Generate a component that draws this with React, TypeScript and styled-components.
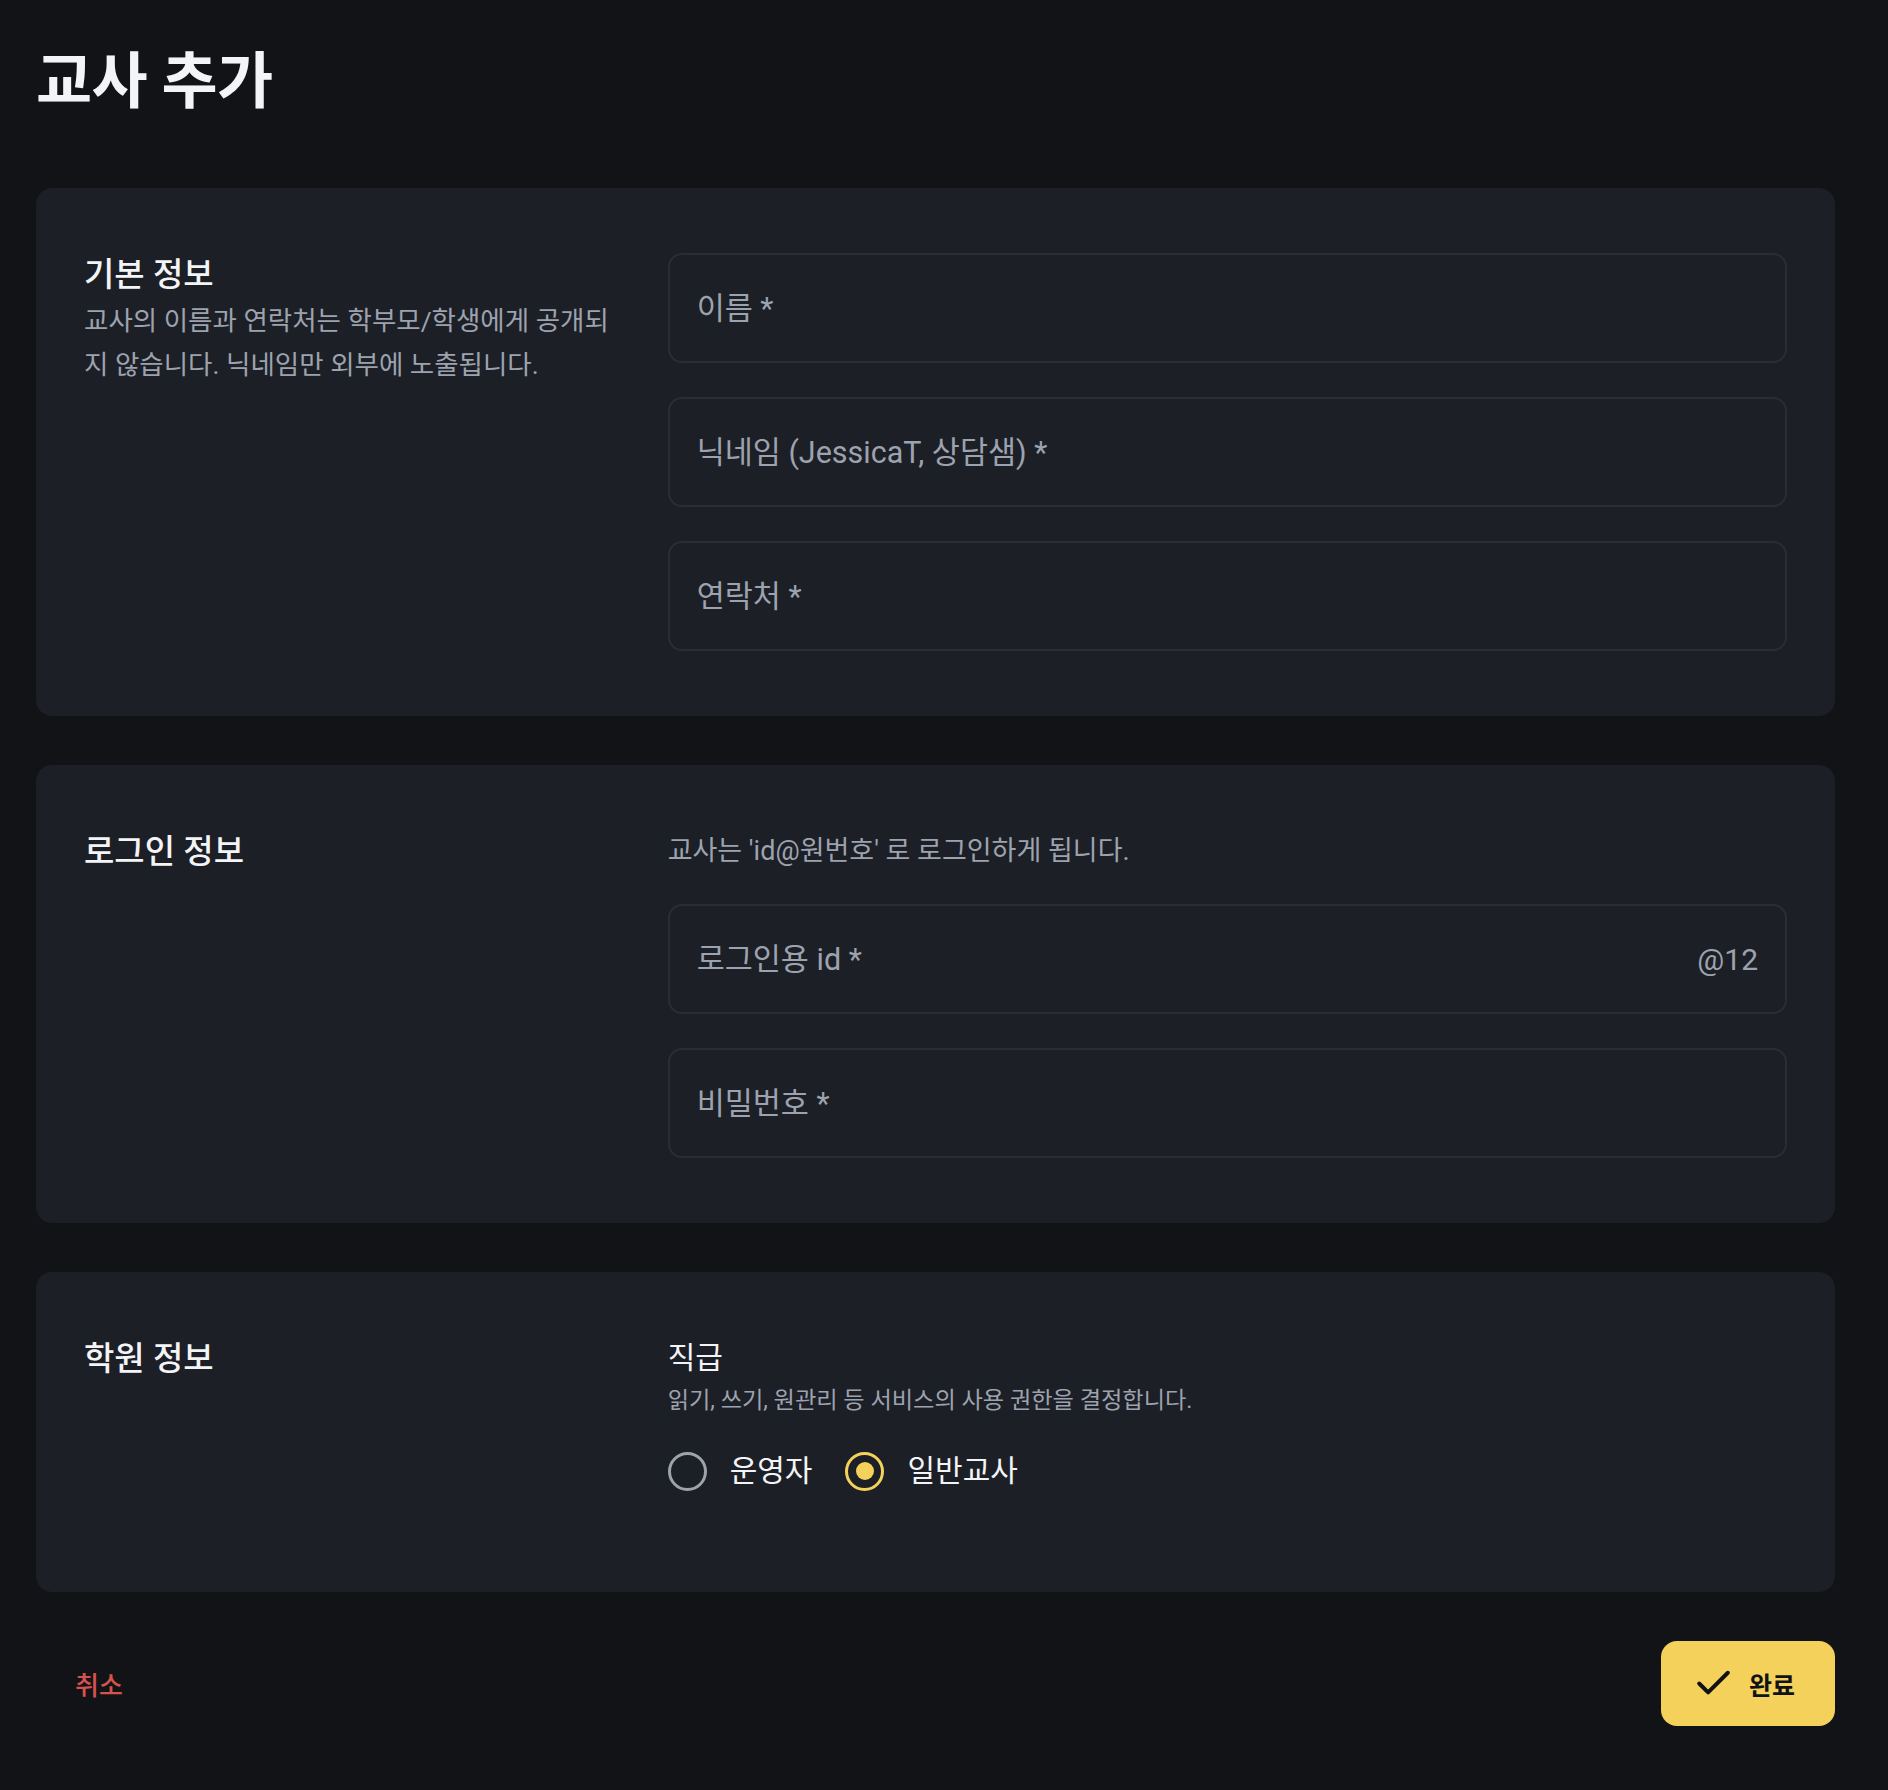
import styled, { createGlobalStyle } from "styled-components";
import { Check } from "lucide-react";

const GlobalStyle = createGlobalStyle`
  html, body {
    margin: 0;
    padding: 0;
    background: #121317;
  }
  body {
    font-family: Roboto, "Noto Sans CJK KR", sans-serif;
    color: #f3f4f6;
  }
  * {
    box-sizing: border-box;
  }
`;

const Page = styled.div`
  min-height: 1790px;
  padding: 42px 53px 63px 36px;
  display: flex;
  flex-direction: column;
`;

const PageTitle = styled.h1`
  margin: 0 0 66px;
  font-size: 61px;
  font-weight: 700;
  line-height: 80px;
  letter-spacing: -0.01em;
  color: #f3f4f6;
`;

const Sections = styled.div`
  display: flex;
  flex-direction: column;
  gap: 49px;
`;

const Card = styled.section`
  background: #1d1f26;
  border-radius: 16px;
  padding: 65px 48px;
  display: grid;
  grid-template-columns: repeat(3, minmax(0, 1fr));
  gap: 48px;
`;

const Intro = styled.div`
  display: flex;
  flex-direction: column;
`;

const SectionTitle = styled.h2`
  margin: 0;
  font-size: 33px;
  font-weight: 500;
  line-height: 43px;
  color: #f3f4f6;
`;

const SectionDesc = styled.p`
  margin: 3px 0 0;
  font-size: 26.5px;
  line-height: 44px;
  color: #9ca3af;
`;

const Fields = styled.div`
  grid-column: span 2;
  display: flex;
  flex-direction: column;
  gap: 34px;
`;

const Hint = styled.p`
  margin: 0 0 -2px;
  font-size: 27px;
  line-height: 42px;
  color: #9ca3af;
`;

const InputBox = styled.label`
  height: 110px;
  border: 2px solid #2a2d35;
  border-radius: 14px;
  padding: 0 27px 0 25px;
  display: flex;
  align-items: center;
  gap: 16px;
`;

const Input = styled.input`
  flex: 1;
  min-width: 0;
  border: 0;
  outline: none;
  background: transparent;
  font: inherit;
  font-size: 30.5px;
  color: #f3f4f6;
  &::placeholder {
    color: #9ca3af;
  }
`;

const Suffix = styled.span`
  font-size: 30px;
  color: #9ca3af;
`;

const Group = styled.div`
  grid-column: span 2;
  display: flex;
  flex-direction: column;
`;

const GroupLabel = styled.div`
  font-size: 30px;
  font-weight: 400;
  line-height: 42px;
  color: #f3f4f6;
`;

const GroupDesc = styled.div`
  margin-top: 4px;
  font-size: 23.2px;
  line-height: 34px;
  color: #9ca3af;
`;

const RadioRow = styled.div`
  margin: 34px 0 36px;
  display: flex;
  align-items: center;
  gap: 33px;
`;

const RadioOption = styled.label`
  display: flex;
  align-items: center;
  gap: 23px;
  font-size: 30px;
  line-height: 40px;
  color: #f3f4f6;
  cursor: pointer;
`;

const RadioCircle = styled.span<{ $checked?: boolean }>`
  width: 39px;
  height: 39px;
  border-radius: 50%;
  border: 3.5px solid ${({ $checked }) => ($checked ? "#f3d15b" : "#9ca3af")};
  display: flex;
  align-items: center;
  justify-content: center;
  &::after {
    content: "";
    width: 18px;
    height: 18px;
    border-radius: 50%;
    background: ${({ $checked }) => ($checked ? "#f3d15b" : "transparent")};
  }
`;

const Footer = styled.div`
  margin-top: 49px;
  display: flex;
  align-items: center;
  justify-content: space-between;
`;

const CancelButton = styled.button`
  height: 85px;
  padding: 0 39px;
  border: 0;
  background: transparent;
  font: inherit;
  font-size: 26px;
  font-weight: 500;
  color: #d6524c;
  cursor: pointer;
`;

const SubmitButton = styled.button`
  height: 85px;
  padding: 0 40px 0 31px;
  border: 0;
  border-radius: 16px;
  background: #f3d15b;
  display: flex;
  align-items: center;
  gap: 14px;
  font: inherit;
  font-size: 25px;
  font-weight: 700;
  color: #111217;
  cursor: pointer;
`;

type Role = "admin" | "teacher";

const roles: { value: Role; label: string }[] = [
  { value: "admin", label: "운영자" },
  { value: "teacher", label: "일반교사" },
];

const App = () => {
  const selected: Role = "teacher";

  return (
    <Page>
      <GlobalStyle />
      <PageTitle>교사 추가</PageTitle>
      <Sections>
        <Card>
          <Intro>
            <SectionTitle>기본 정보</SectionTitle>
            <SectionDesc>
              교사의 이름과 연락처는 학부모/학생에게 공개되지 않습니다.
              닉네임만 외부에 노출됩니다.
            </SectionDesc>
          </Intro>
          <Fields>
            <InputBox>
              <Input placeholder="이름 *" />
            </InputBox>
            <InputBox>
              <Input placeholder="닉네임 (JessicaT, 상담샘) *" />
            </InputBox>
            <InputBox>
              <Input placeholder="연락처 *" />
            </InputBox>
          </Fields>
        </Card>

        <Card>
          <Intro>
            <SectionTitle>로그인 정보</SectionTitle>
          </Intro>
          <Fields>
            <Hint>교사는 'id@원번호' 로 로그인하게 됩니다.</Hint>
            <InputBox>
              <Input placeholder="로그인용 id *" />
              <Suffix>@12</Suffix>
            </InputBox>
            <InputBox>
              <Input type="password" placeholder="비밀번호 *" />
            </InputBox>
          </Fields>
        </Card>

        <Card>
          <Intro>
            <SectionTitle>학원 정보</SectionTitle>
          </Intro>
          <Group>
            <GroupLabel>직급</GroupLabel>
            <GroupDesc>
              읽기, 쓰기, 원관리 등 서비스의 사용 권한을 결정합니다.
            </GroupDesc>
            <RadioRow>
              {roles.map((r) => (
                <RadioOption key={r.value}>
                  <RadioCircle $checked={r.value === selected} />
                  {r.label}
                </RadioOption>
              ))}
            </RadioRow>
          </Group>
        </Card>
      </Sections>

      <Footer>
        <CancelButton>취소</CancelButton>
        <SubmitButton>
          <Check size={43} strokeWidth={2.2} />
          완료
        </SubmitButton>
      </Footer>
    </Page>
  );
};

export default App;
